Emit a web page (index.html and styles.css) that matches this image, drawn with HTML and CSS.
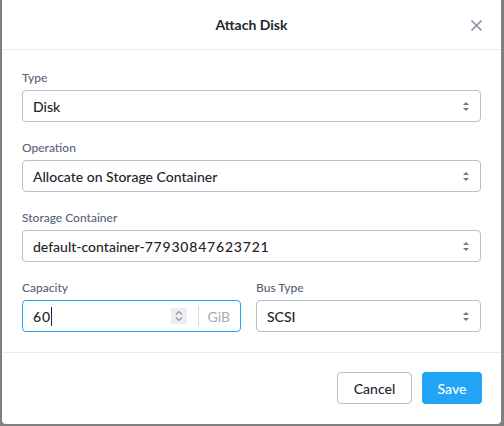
FILE: index.html
```html
<!DOCTYPE html>
<html>
<head>
<meta charset="utf-8">
<link rel="stylesheet" href="styles.css">
</head>
<body>
<div class="backdrop">
  <div class="modal">
    <div class="modal-header">
      <h1 class="title">Attach Disk</h1>
      <button class="close" aria-label="Close">
        <svg width="11" height="11" viewBox="0 0 11 11"><path d="M1 1 L10 10 M10 1 L1 10" stroke="#8793a6" stroke-width="1.7" stroke-linecap="round"/></svg>
      </button>
    </div>
    <div class="modal-body">
      <div class="field">
        <label class="label">Type</label>
        <div class="select"><span>Disk</span><span class="arrows"></span></div>
      </div>
      <div class="field">
        <label class="label">Operation</label>
        <div class="select"><span>Allocate on Storage Container</span><span class="arrows"></span></div>
      </div>
      <div class="field">
        <label class="label">Storage Container</label>
        <div class="select"><span>default-container-<span class="digits">77930847623721</span></span><span class="arrows"></span></div>
      </div>
      <div class="row">
        <div class="field cap">
          <label class="label">Capacity</label>
          <div class="input focused">
            <span class="value digits">60</span><span class="caret"></span>
            <span class="spacer"></span>
            <span class="stepper">
              <svg width="16" height="16" viewBox="0 0 16 16"><path d="M5 6.5 L8 3.5 L11 6.5 M5 9.5 L8 12.5 L11 9.5" fill="none" stroke="#8a93a3" stroke-width="1.1"/></svg>
            </span>
            <span class="sep"></span>
            <span class="unit">GiB</span>
          </div>
        </div>
        <div class="field bus">
          <label class="label">Bus Type</label>
          <div class="select"><span>SCSI</span><span class="arrows"></span></div>
        </div>
      </div>
    </div>
    <div class="modal-footer">
      <button class="btn btn-cancel">Cancel</button>
      <button class="btn btn-save">Save</button>
    </div>
  </div>
</div>
</body>
</html>
```
FILE: styles.css
```css
* { box-sizing: border-box; }
html, body { margin: 0; padding: 0; }
body {
  width: 504px;
  height: 426px;
  background: #808080;
  font-family: Lato, "Open Sans", sans-serif;
  overflow: hidden;
}
.backdrop {
  padding-left: 2px;
}
.modal {
  width: 499px;
  height: 424px;
  background: #fff;
  border-radius: 0 0 4px 4px;
  display: flex;
  flex-direction: column;
}
.modal-header {
  height: 50px;
  border-bottom: 1px solid #e9ebee;
  display: flex;
  align-items: center;
  justify-content: center;
  position: relative;
}
.title {
  margin: 0;
  font-size: 14px;
  font-weight: 700;
  color: #22272e;
}
.close {
  position: absolute;
  right: 19px;
  top: 20px;
  width: 11px;
  height: 11px;
  border: 0;
  padding: 0;
  background: none;
  display: flex;
}
.modal-body {
  padding: 20px 20px 20px;
  display: flex;
  flex-direction: column;
  gap: 18px;
  border-bottom: 1px solid #e9ebee;
}
.field {
  display: flex;
  flex-direction: column;
  gap: 4px;
}
.label {
  font-size: 12px;
  line-height: 16px;
  font-weight: 500;
  color: #56647a;
}
.select {
  height: 32px;
  border: 1px solid #b9c0cc;
  border-radius: 4px;
  display: flex;
  align-items: center;
  justify-content: space-between;
  padding: 0 11px 0 10px;
  font-size: 14px;
  font-weight: 500;
  color: #1f242b;
}
.digits { letter-spacing: 0.8px; }
.arrows {
  width: 6px;
  height: 9px;
  position: relative;
}
.arrows::before, .arrows::after {
  content: "";
  position: absolute;
  left: 0;
  border-left: 3px solid transparent;
  border-right: 3px solid transparent;
}
.arrows::before { top: 0; border-bottom: 3px solid #6d7789; }
.arrows::after { bottom: 0; border-top: 3px solid #6d7789; }
.row {
  display: flex;
  gap: 15px;
}
.cap { width: 219px; }
.bus { flex: 1; }
.input {
  height: 32px;
  border: 1px solid #22a5f7;
  border-radius: 4px;
  display: flex;
  align-items: center;
  padding: 0 10px;
  font-size: 14px;
  font-weight: 500;
  color: #1f242b;
}
.caret {
  width: 1px;
  height: 19px;
  background: #22272e;
  margin-left: 0;
}
.spacer { flex: 1; }
.stepper {
  width: 16px;
  height: 16px;
  background: #eceef2;
  display: flex;
}
.sep {
  width: 1px;
  height: 20px;
  background: #d5d9e0;
  margin: 0 9px 0 11px;
}
.unit {
  color: #a3abb7;
  font-weight: 400;
}
.modal-footer {
  display: flex;
  justify-content: flex-end;
  gap: 10px;
  padding: 19px 19px 0;
}
.btn {
  height: 32px;
  border-radius: 4px;
  font-family: Lato, "Open Sans", sans-serif;
  font-size: 14px;
  font-weight: 500;
  padding: 0;
  cursor: pointer;
}
.btn-cancel {
  width: 75px;
  background: #fff;
  border: 1px solid #b9c0cc;
  color: #22272e;
}
.btn-save {
  width: 60px;
  background: #22a5f7;
  border: 0;
  color: #fff;
}
```
